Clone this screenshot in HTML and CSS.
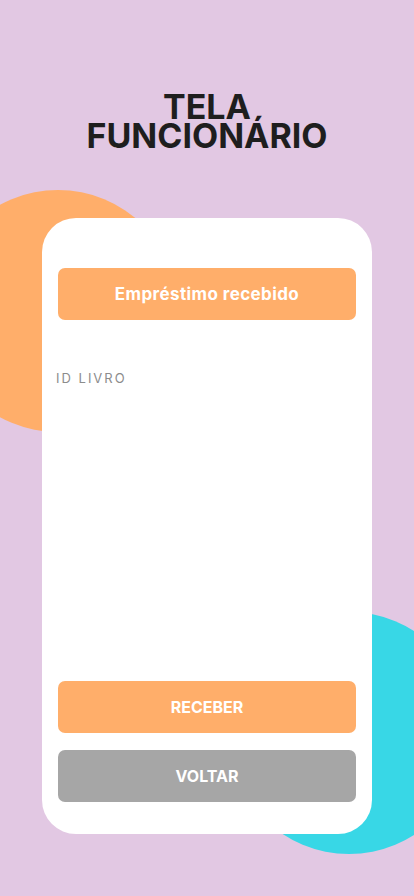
FILE: index.html
```html
<!DOCTYPE html>
<html lang="pt-BR">
<head>
<meta charset="utf-8">
<title>Tela Funcionário</title>
<link rel="stylesheet" href="styles.css">
</head>
<body>
<div class="screen">
  <div class="blob blob-orange"></div>
  <div class="blob blob-cyan"></div>
  <h1 class="title"><span class="title-line">TELA</span><span class="title-line">FUNCIONÁRIO</span></h1>
  <main class="card">
    <button class="btn btn-orange btn-head">Empréstimo recebido</button>
    <label class="field-label">ID LIVRO</label>
    <div class="spacer"></div>
    <div class="actions">
      <button class="btn btn-orange btn-caps">RECEBER</button>
      <button class="btn btn-gray btn-caps">VOLTAR</button>
    </div>
  </main>
</div>
</body>
</html>
```
FILE: styles.css
```css
* { box-sizing: border-box; }
html, body { margin: 0; padding: 0; }
body {
  background: #e2c8e3;
  font-family: "Inter", "Noto Sans", sans-serif;
}
.screen {
  position: relative;
  width: 414px;
  height: 896px;
  overflow: hidden;
  display: flex;
  flex-direction: column;
  align-items: center;
  padding-top: 92px;
}
.blob {
  position: absolute;
  border-radius: 50%;
  width: 242px;
  height: 242px;
}
.blob-orange {
  background: #ffae6a;
  left: -63px;
  top: 190px;
}
.blob-cyan {
  background: #38d7e6;
  left: 228px;
  top: 612px;
}
.title {
  position: relative;
  margin: 0;
  font-size: 34px;
  font-weight: 700;
  color: #1e1e1e;
  text-align: center;
  display: flex;
  flex-direction: column;
  align-items: center;
}
.title-line {
  display: block;
  height: 29px;
  line-height: 29px;
}
.card {
  position: relative;
  margin-top: 68px;
  width: 330px;
  height: 616px;
  background: #ffffff;
  border-radius: 34px;
  padding: 50px 16px 32px;
  display: flex;
  flex-direction: column;
}
.btn {
  display: block;
  width: 100%;
  height: 52px;
  border: none;
  border-radius: 7px;
  color: #ffffff;
  font-family: "Inter", "Noto Sans", sans-serif;
  font-weight: 700;
  padding: 0;
}
.btn-orange { background: #ffae6a; }
.btn-gray { background: #a6a6a6; }
.btn-head { font-size: 17px; letter-spacing: 0.4px; }
.btn-caps { font-size: 16px; }
.field-label {
  margin-top: 50px;
  margin-left: -2px;
  font-size: 13px;
  letter-spacing: 2px;
  color: #8c8c8c;
}
.spacer { flex: 1; }
.actions {
  display: flex;
  flex-direction: column;
  gap: 17px;
}
```
